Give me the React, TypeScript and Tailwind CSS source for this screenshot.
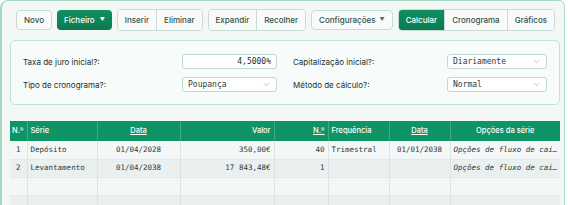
import React from 'react';
import { ChevronDown } from 'lucide-react';

type Row = {
  n: string;
  serie: string;
  data: string;
  valor: string;
  num: string;
  freq: string;
  data2: string;
  opcoes: string;
};

const rows: Row[] = [
  { n: '1', serie: 'Depósito', data: '01/04/2028', valor: '350,00€', num: '40', freq: 'Trimestral', data2: '01/01/2038', opcoes: 'Opções de fluxo de caixa' },
  { n: '2', serie: 'Levantamento', data: '01/04/2038', valor: '17 843,48€', num: '1', freq: '', data2: '', opcoes: 'Opções de fluxo de caixa' },
  { n: '', serie: '', data: '', valor: '', num: '', freq: '', data2: '', opcoes: '' },
  { n: '', serie: '', data: '', valor: '', num: '', freq: '', data2: '', opcoes: '' },
];

function Btn({ children, className = '' }: { children: React.ReactNode; className?: string }) {
  return (
    <button className={`h-[20px] px-[7px] flex items-center text-[8px] font-medium text-[#33504a] bg-[#f8fbfa] ${className}`}>
      {children}
    </button>
  );
}

function Select({ value, width }: { value: string; width: string }) {
  return (
    <div className={`${width} h-[15px] flex items-center justify-between pl-[5px] pr-[5px] rounded-[3px] border border-[#b9dccf] bg-white`}>
      <span className="font-['DejaVu_Sans_Mono',monospace] text-[8px] text-[#2c3a37]">{value}</span>
      <ChevronDown size={9} strokeWidth={1.5} className="text-[#8a9a96]" />
    </div>
  );
}

export default function App() {
  return (
    <div className="w-[570px] h-[205px] overflow-hidden bg-white font-['Inter',sans-serif]">
      <div className="w-[565px] h-[220px] rounded-tl-[8px] rounded-tr-[6px] border border-l-2 border-[#a6d8c6] bg-[#f3f8f7] pl-[8px] pr-[3px] pt-[8px]">
        {/* Toolbar */}
        <div className="flex items-center gap-[5px] pl-[6px]">
          <Btn className="rounded-[4px] border border-[#c6dcd4]">Novo</Btn>
          <button className="h-[20px] px-[7px] flex items-center gap-[5px] rounded-[4px] bg-gradient-to-b from-[#10905f] to-[#0b7a50] text-[8px] font-medium text-white">
            Ficheiro <span className="text-[5px]">▼</span>
          </button>
          <div className="flex rounded-[4px] border border-[#c6dcd4] overflow-hidden divide-x divide-[#c6dcd4]">
            <Btn>Inserir</Btn>
            <Btn>Eliminar</Btn>
          </div>
          <div className="flex rounded-[4px] border border-[#c6dcd4] overflow-hidden divide-x divide-[#c6dcd4]">
            <Btn>Expandir</Btn>
            <Btn>Recolher</Btn>
          </div>
          <Btn className="rounded-[4px] border border-[#c6dcd4] gap-[4px]">
            Configurações <span className="text-[5px] text-[#556b66]">▼</span>
          </Btn>
          <div className="flex rounded-[4px] border border-[#c6dcd4] overflow-hidden divide-x divide-[#c6dcd4]">
            <button className="h-[20px] px-[7px] flex items-center text-[8px] font-medium text-white bg-gradient-to-b from-[#10905f] to-[#0b7a50]">
              Calcular
            </button>
            <Btn>Cronograma</Btn>
            <Btn>Gráficos</Btn>
          </div>
        </div>

        {/* Form panel */}
        <div className="mt-[9px] w-[550px] rounded-[5px] border border-[#c2e2d6] bg-[#f7fbfa] px-[12px] pt-[13px] pb-[12px] grid grid-cols-2 gap-x-[16px] gap-y-[8px] text-[8px] text-[#22302d]">
          <div className="flex items-center justify-between">
            <span>Taxa de juro inicial?:</span>
            <div className="w-[95px] h-[15px] flex items-center justify-end pr-[5px] rounded-[3px] border border-[#b9dccf] bg-white font-['DejaVu_Sans_Mono',monospace] text-[8px]">
              4,5000%
            </div>
          </div>
          <div className="flex items-center justify-between">
            <span>Capitalização inicial?:</span>
            <Select value="Diariamente" width="w-[100px]" />
          </div>
          <div className="flex items-center justify-between">
            <span>Tipo de cronograma?:</span>
            <Select value="Poupança" width="w-[95px]" />
          </div>
          <div className="flex items-center justify-between">
            <span>Método de cálculo?:</span>
            <Select value="Normal" width="w-[100px]" />
          </div>
        </div>

        {/* Table */}
        <table className="mt-[16px] w-[550px] table-fixed border-collapse">
          <colgroup>
            <col className="w-[17px]" />
            <col className="w-[70px]" />
            <col className="w-[83px]" />
            <col className="w-[94px]" />
            <col className="w-[54px]" />
            <col className="w-[61px]" />
            <col className="w-[61px]" />
            <col className="w-[110px]" />
          </colgroup>
          <thead>
            <tr className="h-[20px] bg-[#0f9466] text-white text-[7.5px] font-medium">
              <th className="px-[2px] text-left font-medium border-r border-[#3faa84]">N.º</th>
              <th className="px-[3px] text-left font-medium border-r border-[#3faa84]">Série</th>
              <th className="px-[3px] text-center font-medium underline border-r border-[#3faa84]">Data</th>
              <th className="px-[3px] text-right font-medium border-r border-[#3faa84]">Valor</th>
              <th className="px-[3px] text-right font-medium underline border-r border-[#3faa84]">N.º</th>
              <th className="px-[3px] text-left font-medium border-r border-[#3faa84]">Frequência</th>
              <th className="px-[3px] text-center font-medium underline border-r border-[#3faa84]">Data</th>
              <th className="px-[3px] text-center font-medium">Opções da série</th>
            </tr>
          </thead>
          <tbody className="font-['DejaVu_Sans_Mono',monospace] text-[7.5px] text-[#2c3a37]">
            {rows.map((r, i) => (
              <tr key={i} className={`h-[18px] border-b border-[#e2e9e8] ${i % 2 === 0 ? 'bg-[#f4f7f7]' : 'bg-[#eaf0ef]'}`}>
                <td className="text-center border-r border-[#dde5e4]">{r.n}</td>
                <td className="px-[3px] border-r border-[#dde5e4]">{r.serie}</td>
                <td className="px-[3px] text-center border-r border-[#dde5e4]">{r.data}</td>
                <td className="px-[3px] text-right border-r border-[#dde5e4]">{r.valor}</td>
                <td className="px-[3px] text-right border-r border-[#dde5e4]">{r.num}</td>
                <td className="px-[3px] border-r border-[#dde5e4]">{r.freq}</td>
                <td className="px-[3px] text-center border-r border-[#dde5e4]">{r.data2}</td>
                <td className="pl-[3px] pr-[1px] italic truncate">{r.opcoes}</td>
              </tr>
            ))}
          </tbody>
        </table>
      </div>
    </div>
  );
}
